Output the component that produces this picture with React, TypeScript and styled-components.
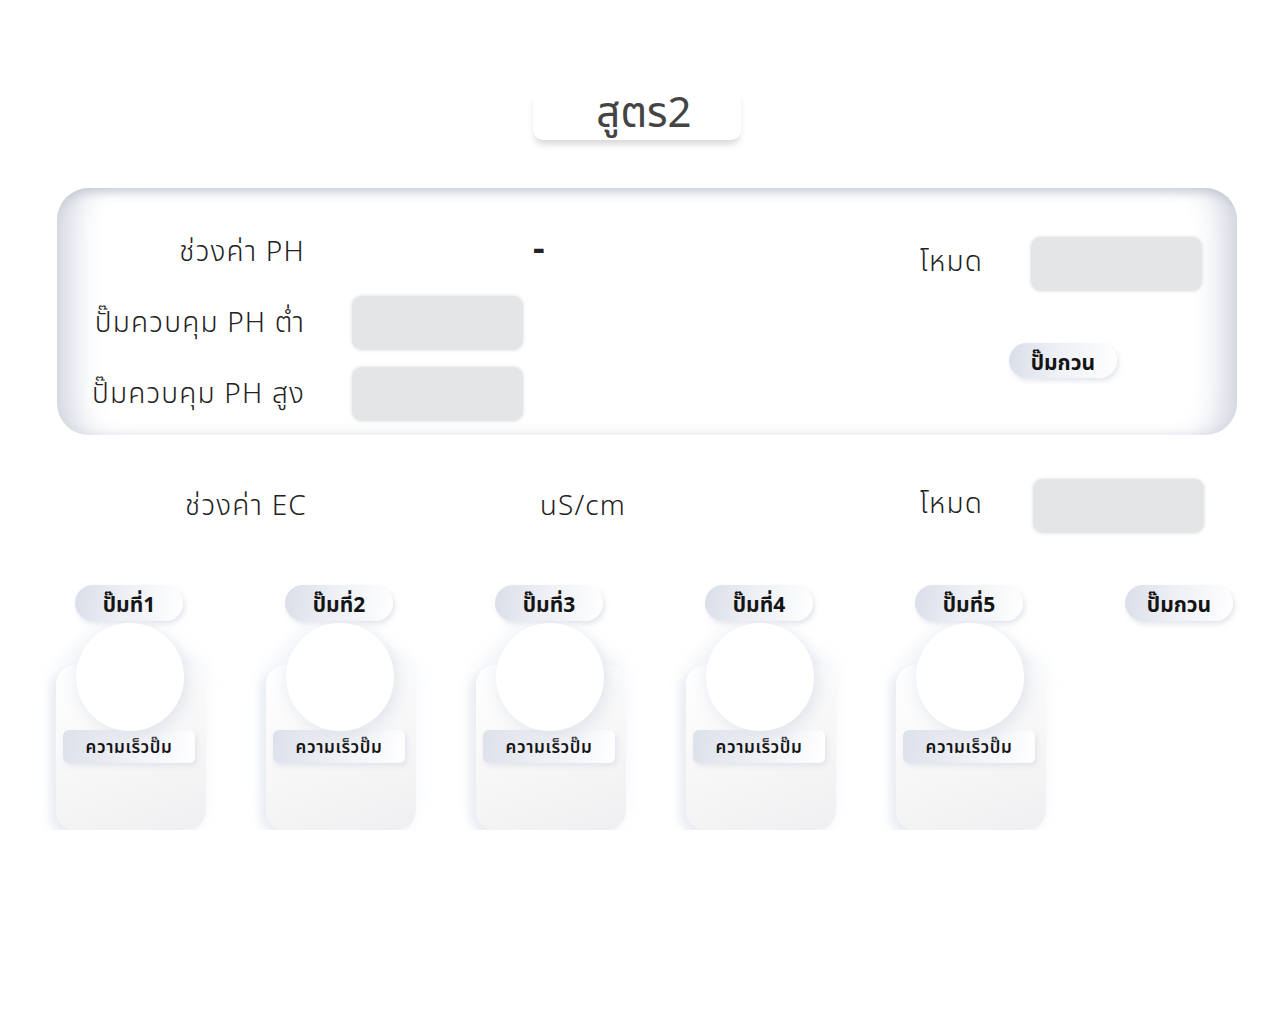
import React from 'react';
import styled, { createGlobalStyle } from 'styled-components';

const GlobalStyle = createGlobalStyle`
  body {
    margin: 0;
    background: #ffffff;
    font-family: "Noto Sans Thai", "Noto Sans", "DejaVu Sans", sans-serif;
    color: #222;
  }
`;

const Page = styled.div`
  width: 1280px;
  padding-top: 88px;
`;

const TitleWrap = styled.div`
  display: flex;
  justify-content: center;
  margin-left: -6px;
`;

const Title = styled.div`
  width: 208px;
  height: 52px;
  border-radius: 10px;
  background: #fff;
  box-shadow: 0 6px 7px -2px rgba(0, 0, 0, 0.16);
  display: flex;
  align-items: flex-end;
  justify-content: center;
  font-size: 42px;
  font-weight: 400;
  line-height: 1;
  color: #444;
  padding: 0 0 5px 14px;
  box-sizing: border-box;
`;

const Panel = styled.div`
  margin: 48px 43px 0 57px;
  height: 247px;
  box-sizing: border-box;
  padding: 37px 35px 0 0;
  border-radius: 32px;
  background: #fff;
  box-shadow:
    inset 0 10px 10px -6px rgba(196, 200, 212, 0.9),
    inset 34px 0 30px -20px rgba(200, 204, 216, 0.85),
    inset -34px 0 30px -20px rgba(200, 204, 216, 0.85),
    inset 0 -6px 8px -6px rgba(225, 227, 234, 0.6);
  display: flex;
  justify-content: space-between;
`;

const LeftGrid = styled.div`
  display: grid;
  grid-template-columns: 246px 171px;
  grid-auto-rows: 54px;
  column-gap: 49px;
  row-gap: 17px;
`;

const Label = styled.div`
  display: flex;
  align-items: center;
  justify-content: flex-end;
  margin-right: -2px;
  font-size: 28px;
  font-weight: 300;
  letter-spacing: 1.2px;
  color: #222;
  white-space: nowrap;
`;

const Value = styled.div<{ $offset?: number }>`
  display: flex;
  align-items: center;
  padding-left: ${p => p.$offset || 0}px;
  font-size: 28px;
  font-weight: 300;
  letter-spacing: 1.2px;
  color: #222;
  white-space: nowrap;
`;

const Dash = styled.span`
  font-size: 36px;
  font-weight: 700;
  margin-top: -6px;
`;

const Field = styled.div`
  width: 171px;
  height: 54px;
  border-radius: 10px;
  background: #e4e5e7;
  box-shadow: 0 0 3px 1px #e9eaeb;
`;

const RightBlock = styled.div`
  display: flex;
  flex-direction: column;
  align-items: center;
  padding-top: 12px;
`;

const ModeRow = styled.div`
  display: flex;
  align-items: center;
  gap: 48px;
`;

const ModeLabel = styled.div`
  font-size: 28px;
  font-weight: 300;
  letter-spacing: 1.2px;
  color: #222;
  margin-top: -3px;
`;

const Pill = styled.div<{ $w: number; $h: number; $size: number }>`
  width: ${p => p.$w}px;
  height: ${p => p.$h}px;
  border-radius: ${p => p.$h / 2}px;
  box-sizing: border-box;
  padding-top: 5px;
  background: linear-gradient(100deg, #d9dee9 0%, #eef0f5 45%, #ffffff 100%);
  box-shadow: 2px 3px 5px rgba(205, 210, 222, 0.55);
  display: flex;
  align-items: center;
  justify-content: center;
  font-size: ${p => p.$size}px;
  font-weight: 700;
  color: #141414;
  white-space: nowrap;
`;

const StirPill = styled(Pill)`
  margin-top: 52px;
  margin-left: 4px;
`;

const EcRow = styled.div`
  margin: 44px 76px 0 59px;
  display: flex;
  justify-content: space-between;
`;

const EcRight = styled.div`
  display: flex;
  align-items: center;
  gap: 50px;
`;

const PumpRow = styled.div`
  margin: 52px 0 0 25px;
  display: grid;
  grid-template-columns: repeat(6, 210px);
  align-items: start;
`;

const PumpCol = styled.div`
  display: flex;
  flex-direction: column;
  align-items: center;
`;

const PumpPill = styled(Pill)`
  margin-left: -2px;
`;

const Dial = styled.div`
  position: relative;
  z-index: 1;
  width: 108px;
  height: 108px;
  margin-top: 2px;
  border-radius: 50%;
  background: #fff;
  box-shadow:
    6px 6px 14px rgba(214, 218, 228, 0.55),
    -6px -4px 14px rgba(238, 241, 247, 0.6);
`;

const Body = styled.div`
  width: 150px;
  height: 165px;
  margin-top: -66px;
  margin-left: 2px;
  box-sizing: border-box;
  padding-top: 65px;
  border-radius: 20px;
  background: linear-gradient(160deg, #ffffff 0%, #f7f7f8 55%, #efeff1 100%);
  box-shadow:
    -6px 6px 10px rgba(225, 229, 238, 0.7),
    0 -10px 18px rgba(238, 241, 248, 0.6);
  display: flex;
  flex-direction: column;
  align-items: center;
`;

const SpeedPill = styled.div`
  width: 132px;
  height: 33px;
  margin-left: -4px;
  box-sizing: border-box;
  padding-top: 3px;
  border-radius: 6px;
  background: linear-gradient(100deg, #dde1ea 0%, #eef0f5 50%, #ffffff 100%);
  box-shadow: 2px 3px 5px rgba(210, 214, 225, 0.5);
  display: flex;
  align-items: center;
  justify-content: center;
  font-size: 17px;
  font-weight: 600;
  letter-spacing: 0.6px;
  color: #141414;
  white-space: nowrap;
`;

const pumps = [1, 2, 3, 4, 5];

export default function App() {
  return (
    <Page>
      <GlobalStyle />
      <TitleWrap>
        <Title>สูตร2</Title>
      </TitleWrap>

      <Panel>
        <LeftGrid>
          <Label>ช่วงค่า PH</Label>
          <Value $offset={181}><Dash>-</Dash></Value>
          <Label>ปั๊มควบคุม PH ต่ำ</Label>
          <Field />
          <Label>ปั๊มควบคุม PH สูง</Label>
          <Field />
        </LeftGrid>
        <RightBlock>
          <ModeRow>
            <ModeLabel>โหมด</ModeLabel>
            <Field />
          </ModeRow>
          <StirPill $w={108} $h={35} $size={21}>ปั๊มกวน</StirPill>
        </RightBlock>
      </Panel>

      <EcRow>
        <LeftGrid>
          <Label>ช่วงค่า EC</Label>
          <Value $offset={186}>uS/cm</Value>
        </LeftGrid>
        <EcRight>
          <ModeLabel>โหมด</ModeLabel>
          <Field />
        </EcRight>
      </EcRow>

      <PumpRow>
        {pumps.map(n => (
          <PumpCol key={n}>
            <PumpPill $w={108} $h={36} $size={21}>ปั๊มที่{n}</PumpPill>
            <Dial />
            <Body>
              <SpeedPill>ความเร็วปั๊ม</SpeedPill>
            </Body>
          </PumpCol>
        ))}
        <PumpCol>
          <PumpPill $w={108} $h={36} $size={21}>ปั๊มกวน</PumpPill>
        </PumpCol>
      </PumpRow>
    </Page>
  );
}
